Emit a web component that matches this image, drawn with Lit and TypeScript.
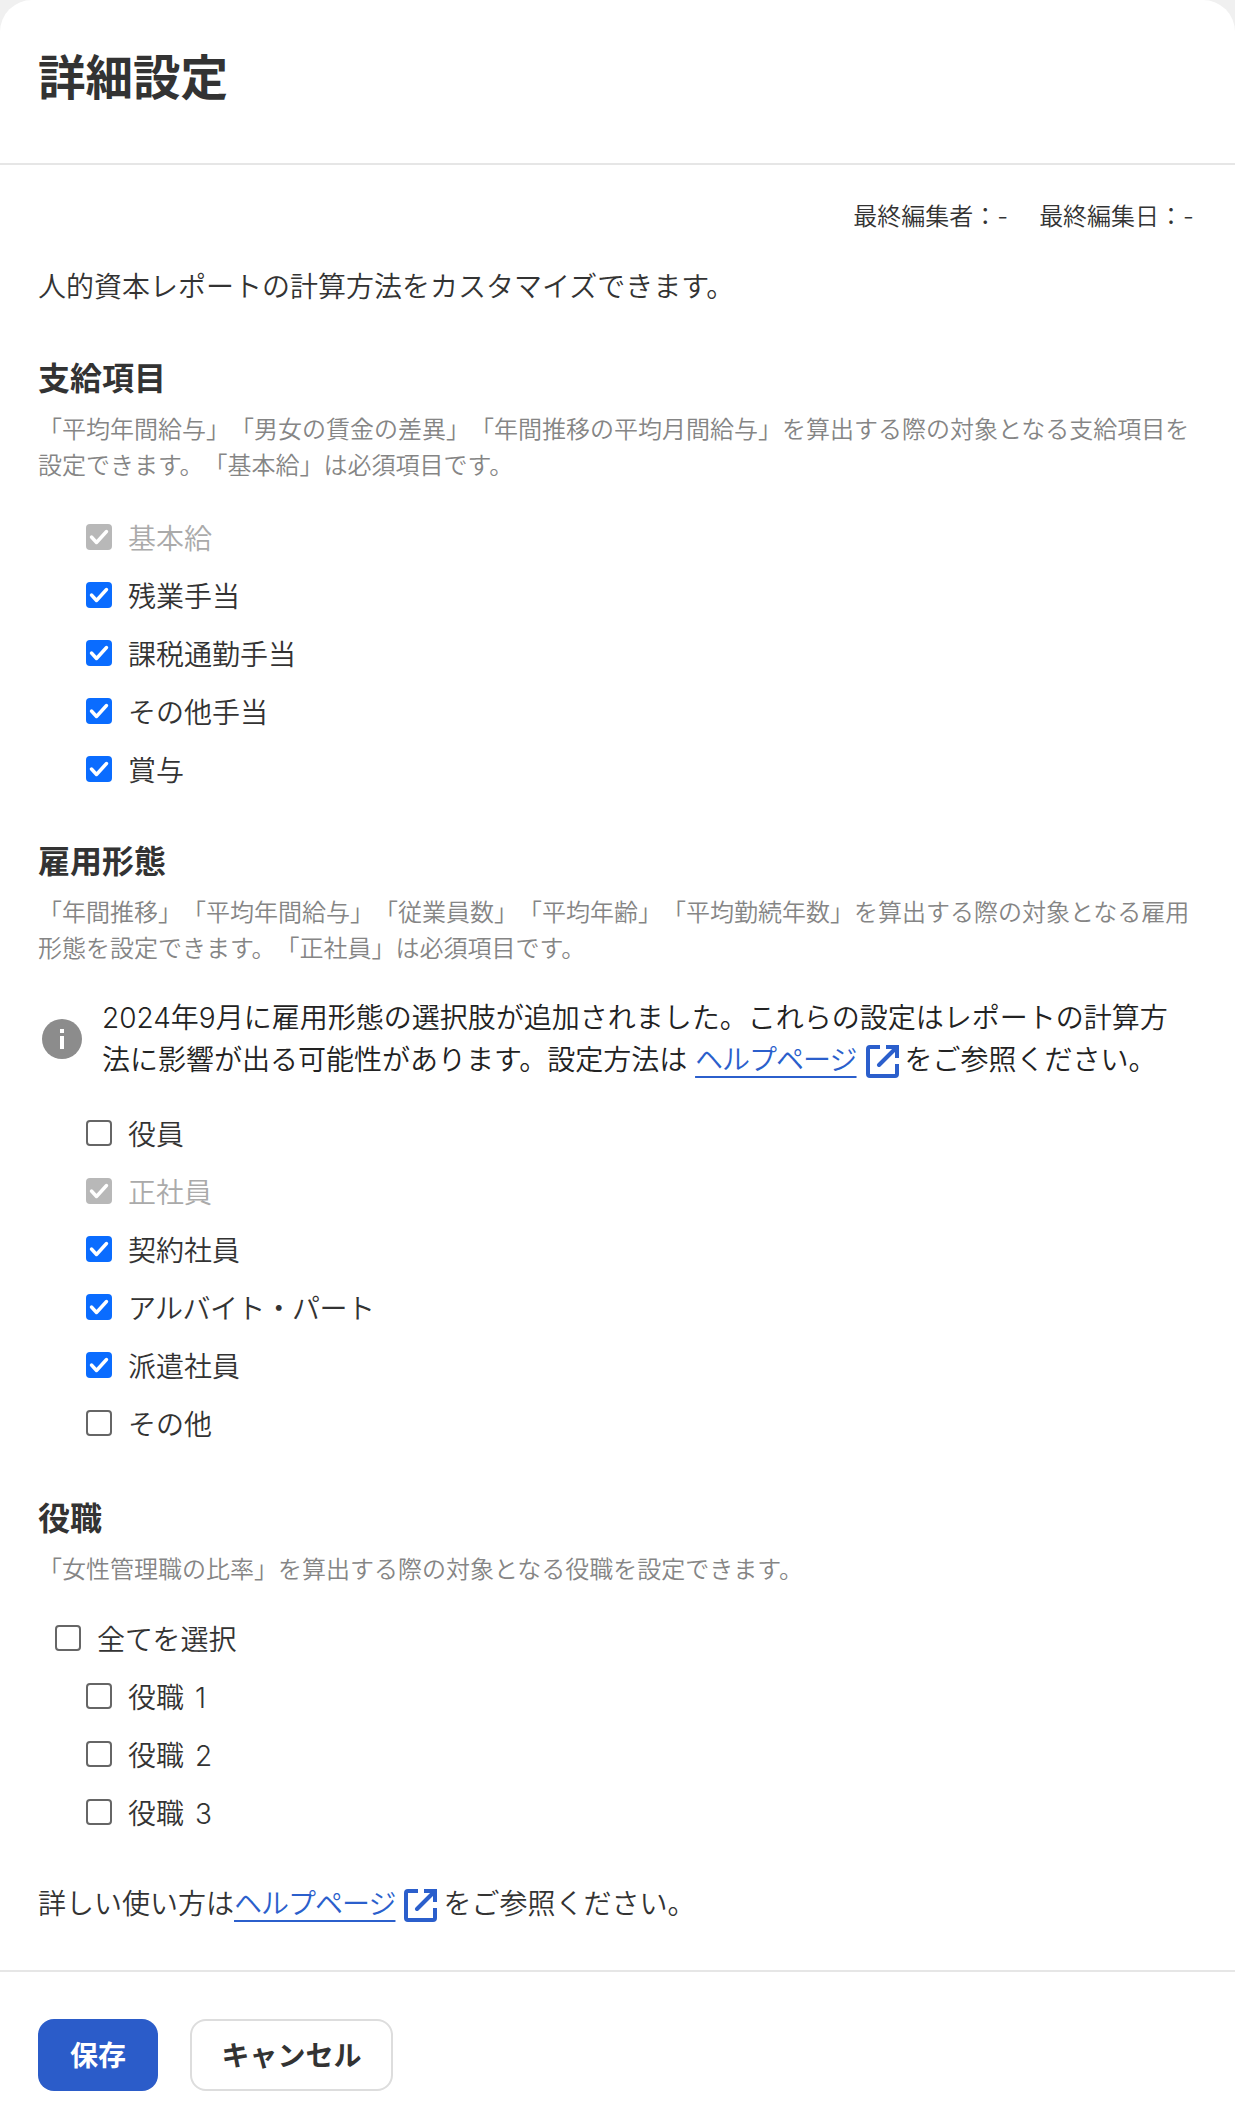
import { LitElement, html, css, svg } from "lit";
import { customElement } from "lit/decorators.js";

const extIcon = html`<svg class="ext" viewBox="0 0 33 33" fill="none" stroke="#2b5fcc" stroke-width="4"><path d="M14 2H4a2 2 0 0 0-2 2v25a2 2 0 0 0 2 2h25a2 2 0 0 0 2-2V19"/><path d="M20 2h11v11"/><path d="M30.500 2.500 13 20" stroke-linecap="round"/></svg>`;

type Item = [string, "on" | "off" | "dis", string?];

@customElement("app-root")
export class AppRoot extends LitElement {
  static styles = css`
    :host { display: block; width: 1235px; height: 2121px; background: #f0f0f0; font-family: Inter, "Noto Sans CJK JP", sans-serif; font-weight: 350; color: #333; overflow: hidden; text-spacing-trim: space-all; }
    .card { background: #fff; border-radius: 32px 32px 0 0; height: 2121px; display: flex; flex-direction: column; box-sizing: border-box; }
    header { box-sizing: border-box; border-bottom: 2px solid #e6e6e6; height: 165px; padding: 43px 38px 0; }
    h1 { margin: 0; font-size: 47.500px; font-weight: 700; line-height: 70px; }
    main { padding: 0 38px; flex: 1; }
    .meta { display: flex; justify-content: flex-end; gap: 31px; font-size: 24px; line-height: 36px; margin: 34px 3px 0 0; }
    .intro { font-size: 28px; line-height: 42px; margin: 31px 0 0; }
    h2 { font-size: 32px; font-weight: 700; line-height: 46px; margin: 48px 0 0; }
    ul + h2 { margin-top: 41px; }
    ul + h2.last { margin-top: 44px; }
    .desc { font-size: 24px; line-height: 36px; color: #858585; margin: 10px 0 0; }
    ul { list-style: none; margin: 24px 0 0; padding: 0 0 0 48px; }
    ul.sel { margin-top: 21px; }
    li { display: flex; align-items: center; height: 58px; gap: 16px; font-size: 28px; word-spacing: 3px; }
    li.all { margin-left: -31px; }
    li.kana { letter-spacing: -0.600px; }
    li.dis { color: #aaa; }
    .box { width: 26px; height: 26px; box-sizing: border-box; border-radius: 4px; border: 2px solid #666; flex: none; display: block; }
    .box.on { background: #0a6cff; border: none; }
    .box.dis { background: #b8b8b8; border: none; }
    .box svg { width: 26px; height: 26px; display: block; }
    .notice { display: flex; align-items: center; gap: 20px; padding: 0 12px 0 4px; margin: 30px 0 0; font-size: 28px; line-height: 42px; color: #222; }
    .notice svg.i { width: 40px; height: 40px; flex: none; }
    .notice + ul { margin-top: 23px; }
    a { color: #2b5fcc; text-decoration: underline; text-underline-offset: 6px; text-decoration-thickness: 2px; letter-spacing: -1px; }
    .ext { width: 33px; height: 33px; vertical-align: -8px; margin: 0 6px 0 9px; }
    .foot { font-size: 28px; line-height: 42px; margin: 42px 0 0; }
    footer { border-top: 2px solid #e6e6e6; padding: 47px 38px 0; height: 151px; box-sizing: border-box; display: flex; gap: 32px; align-items: flex-start; }
    button { font: inherit; font-weight: 700; font-size: 28px; height: 72px; border-radius: 16px; box-sizing: border-box; padding: 0 0 2px; }
    .save { width: 120px; background: #2b5cc9; color: #fff; border: none; }
    .cancel { width: 203px; background: #fff; color: #333; border: 2px solid #ddd; }
  `;

  private box(state: string) {
    const check = svg`<path d="M5.500 13 10.500 18.500 20.500 7.500" fill="none" stroke="#fff" stroke-width="3.400" stroke-linecap="round" stroke-linejoin="round"/>`;
    return html`<span class="box ${state}">${state === "off" ? "" : html`<svg viewBox="0 0 26 26">${check}</svg>`}</span>`;
  }

  private list(items: Item[], cls = "") {
    return html`<ul class="${cls}">${items.map(
      ([t, s, c]) => html`<li class="${s === "dis" ? "dis" : ""} ${c ?? ""}">${this.box(s)}<span>${t}</span></li>`
    )}</ul>`;
  }

  render() {
    return html`<div class="card">
      <header><h1>詳細設定</h1></header>
      <main>
        <div class="meta"><span>最終編集者：-</span><span>最終編集日：-</span></div>
        <p class="intro">人的資本レポートの計算方法をカスタマイズできます。</p>
        <h2>支給項目</h2>
        <p class="desc">「平均年間給与」「男女の賃金の差異」「年間推移の平均月間給与」を算出する際の対象となる支給項目を設定できます。「基本給」は必須項目です。</p>
        ${this.list([["基本給", "dis"], ["残業手当", "on"], ["課税通勤手当", "on"], ["その他手当", "on"], ["賞与", "on"]])}
        <h2>雇用形態</h2>
        <p class="desc">「年間推移」「平均年間給与」「従業員数」「平均年齢」「平均勤続年数」を算出する際の対象となる雇用形態を設定できます。「正社員」は必須項目です。</p>
        <div class="notice">
          <svg class="i" viewBox="0 0 40 40"><circle cx="20" cy="20" r="20" fill="#8c8c8c"/><rect x="18" y="17" width="4" height="13" fill="#fff"/><rect x="18" y="10" width="4" height="4" fill="#fff"/></svg>
          <div>2024年9月に雇用形態の選択肢が追加されました。これらの設定はレポートの計算方法に影響が出る可能性があります。設定方法は <a>ヘルプページ</a>${extIcon}をご参照ください。</div>
        </div>
        ${this.list([["役員", "off"], ["正社員", "dis"], ["契約社員", "on"], ["アルバイト・パート", "on", "kana"], ["派遣社員", "on"], ["その他", "off"]])}
        <h2 class="last">役職</h2>
        <p class="desc">「女性管理職の比率」を算出する際の対象となる役職を設定できます。</p>
        ${this.list([["全てを選択", "off", "all"], ["役職 1", "off"], ["役職 2", "off"], ["役職 3", "off"]], "sel")}
        <p class="foot">詳しい使い方は<a>ヘルプページ</a>${extIcon}をご参照ください。</p>
      </main>
      <footer><button class="save">保存</button><button class="cancel">キャンセル</button></footer>
    </div>`;
  }
}
